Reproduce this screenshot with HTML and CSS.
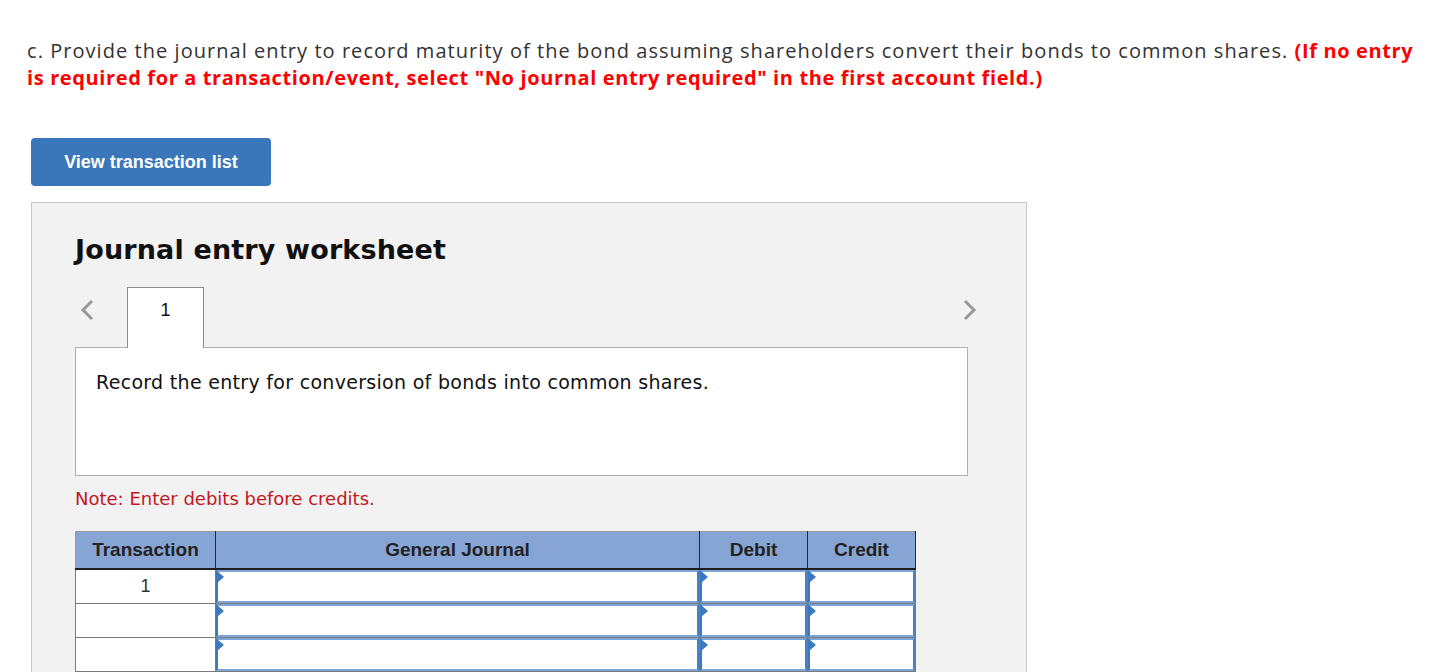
FILE: index.html
```html
<!DOCTYPE html>
<html>
<head>
<meta charset="utf-8">
<link rel="stylesheet" href="styles.css">
</head>
<body>
<div class="page">
  <p class="question">c. Provide the journal entry to record maturity of the bond assuming shareholders convert their bonds to common shares. <strong class="warn">(If no entry is required for a transaction/event, select "No journal entry required" in the first account field.)</strong></p>

  <button class="btn-list" type="button">View transaction list</button>

  <section class="panel">
    <h2 class="panel-title">Journal entry worksheet</h2>

    <div class="tabs">
      <span class="nav nav-prev">
        <svg width="16" height="22" viewBox="0 0 16 22"><path d="M13 2 L4 11 L13 20" fill="none" stroke="#9a9a9a" stroke-width="3"/></svg>
      </span>
      <span class="tab">1</span>
      <span class="tabs-fill"></span>
      <span class="nav nav-next">
        <svg width="16" height="22" viewBox="0 0 16 22"><path d="M3 2 L12 11 L3 20" fill="none" stroke="#9a9a9a" stroke-width="3"/></svg>
      </span>
    </div>

    <div class="prompt">Record the entry for conversion of bonds into common shares.</div>

    <p class="note">Note: Enter debits before credits.</p>

    <table class="journal">
      <colgroup>
        <col class="c-tr"><col class="c-gj"><col class="c-dr"><col class="c-cr">
      </colgroup>
      <thead>
        <tr><th>Transaction</th><th>General Journal</th><th>Debit</th><th>Credit</th></tr>
      </thead>
      <tbody>
        <tr><td class="tr-num">1</td><td><div class="field"></div></td><td><div class="field"></div></td><td><div class="field"></div></td></tr>
        <tr><td class="tr-num"></td><td><div class="field"></div></td><td><div class="field"></div></td><td><div class="field"></div></td></tr>
        <tr><td class="tr-num"></td><td><div class="field"></div></td><td><div class="field"></div></td><td><div class="field"></div></td></tr>
      </tbody>
    </table>
  </section>
</div>
</body>
</html>
```
FILE: styles.css
```css
html, body {
  margin: 0;
  padding: 0;
  background: #ffffff;
}
body {
  overflow: hidden;
  height: 672px;
}
.page {
  padding: 37px 0 0 27px;
  width: 1404px;
}
.question {
  margin: 0;
  font-family: "Open Sans", Lato, sans-serif;
  font-size: 20px;
  letter-spacing: 1.05px;
  line-height: 27px;
  color: #333333;
}
.warn {
  color: #ff0000;
  font-weight: 700;
  letter-spacing: 0.63px;
}
.btn-list {
  display: block;
  margin: 47px 0 0 4px;
  width: 240px;
  height: 48px;
  border: 0;
  border-radius: 4px;
  background: #3a76ba;
  color: #ffffff;
  font-family: "Liberation Sans", Arial, sans-serif;
  font-weight: 700;
  font-size: 18px;
  padding: 0;
}
.panel {
  margin: 16px 0 0 4px;
  width: 996px;
  height: 520px;
  box-sizing: border-box;
  background: #f2f2f2;
  border: 1px solid #c8c8c8;
  padding: 30px 0 0 43px;
}
.panel-title {
  margin: 0;
  font-family: "DejaVu Sans", Verdana, sans-serif;
  font-weight: 700;
  font-size: 27px;
  letter-spacing: 0.15px;
  line-height: 34px;
  color: #111111;
}
.tabs {
  display: flex;
  align-items: flex-start;
  width: 893px;
  margin-top: 20px;
  height: 60px;
}
.nav {
  display: flex;
  align-items: center;
  justify-content: center;
  height: 45px;
}
.nav-prev {
  width: 52px;
  justify-content: flex-start;
  padding-left: 4px;
  box-sizing: border-box;
}
.nav-next {
  width: 20px;
  margin-right: -12px;
}
.tab {
  width: 77px;
  height: 61px;
  box-sizing: border-box;
  border: 1px solid #8c8c8c;
  border-bottom: 0;
  background: #ffffff;
  text-align: center;
  font-family: "Liberation Sans", Arial, sans-serif;
  font-size: 18px;
  line-height: 45px;
  color: #111111;
  position: relative;
  z-index: 1;
}
.tabs-fill {
  flex: 1;
}
.prompt {
  width: 893px;
  height: 129px;
  box-sizing: border-box;
  background: #ffffff;
  border: 1px solid #b0b0b0;
  padding: 22px 0 0 20px;
  font-family: "DejaVu Sans", Verdana, sans-serif;
  font-size: 19px;
  letter-spacing: 0.3px;
  line-height: 24px;
  color: #111111;
}
.note {
  margin: 12px 0 0 0;
  font-family: "DejaVu Sans", Verdana, sans-serif;
  font-size: 18px;
  line-height: 22px;
  color: #c0171e;
}
.journal {
  margin-top: 21px;
  width: 841px;
  border-collapse: collapse;
  table-layout: fixed;
}
.c-tr { width: 140px; }
.c-gj { width: 484px; }
.c-dr { width: 108px; }
.c-cr { width: 108px; }
.journal th {
  height: 36px;
  padding: 0;
  background: #87a5d4;
  border-top: 1px solid #9a9a9a;
  border-left: 1px solid #2a2a2a;
  border-right: 1px solid #2a2a2a;
  border-bottom: 2px solid #1e1e1e;
  font-family: "Liberation Sans", Arial, sans-serif;
  font-weight: 700;
  font-size: 19px;
  color: #222222;
  text-align: center;
}
.journal th:first-child {
  border-left-color: #9a9a9a;
}
.journal td {
  height: 33px;
  padding: 0;
  border: 1px solid #7a7a7a;
  background: #ffffff;
}
.journal td.tr-num {
  text-align: center;
  font-family: "Liberation Sans", Arial, sans-serif;
  font-size: 18px;
  color: #333333;
  vertical-align: middle;
}
.field {
  position: relative;
  height: 33px;
  box-sizing: border-box;
  border: 2px solid #7fa5d6;
  border-left-color: #3f77bd;
  border-right-color: #4a80c2;
  background: #ffffff;
}
.field::before {
  content: "";
  position: absolute;
  left: -1px;
  top: -1px;
  width: 0;
  height: 0;
  border-top: 6px solid transparent;
  border-bottom: 6px solid transparent;
  border-left: 7px solid #3a78c2;
}
```
